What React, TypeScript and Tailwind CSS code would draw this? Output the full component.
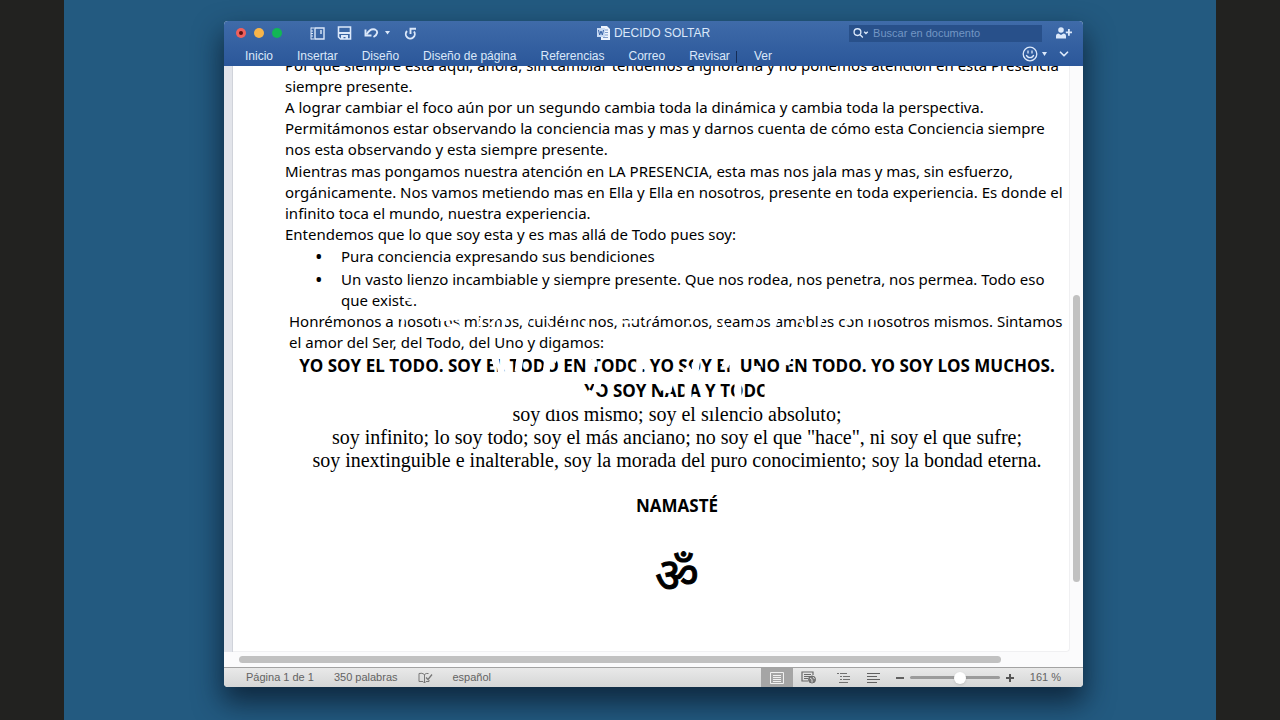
import { ChevronDown } from 'lucide-react';

const tabs = ['Inicio', 'Insertar', 'Diseño', 'Diseño de página', 'Referencias', 'Correo', 'Revisar', 'Ver'];

function TitleBar() {
  return (
    <div className="grid h-6 grid-cols-[1fr_auto_1fr] items-center text-[#dbe8fa]">
      <div className="flex items-center pl-3">
        <div className="flex gap-2">
          <button aria-label="Cerrar" className="flex size-2.5 items-center justify-center rounded-full bg-[#f0605c]">
            <span className="size-1 rounded-full bg-[#5c1010]" />
          </button>
          <button aria-label="Minimizar" className="size-2.5 rounded-full bg-[#f8b54a]" />
          <button aria-label="Ampliar" className="size-2.5 rounded-full bg-[#12b755]" />
        </div>
        <button aria-label="Barra lateral" className="ml-7">
          <svg width="15" height="13" viewBox="0 0 15 13" fill="none" stroke="currentColor" strokeWidth="1.4">
            <path d="M5 1h9v11H5z" />
            <path d="M11 3v4" />
            <path d="M1 .5v12M4 1H1M4 12H1M1 4h2M1 6.500h2M1 9h2" strokeWidth="1" />
          </svg>
        </button>
        <button aria-label="Guardar" className="ml-3">
          <svg width="15" height="14" viewBox="0 0 15 14" fill="none" stroke="currentColor" strokeWidth="1.600">
            <path d="M1.500 1h12v12h-10l-2-2z" />
            <path d="M1.500 7h12" strokeWidth="2" />
            <path d="M4 9h7v4H8.500v-2h-2v2H4z" fill="currentColor" stroke="none" />
          </svg>
        </button>
        <button aria-label="Deshacer" className="ml-3">
          <svg width="15" height="12" viewBox="0 0 15 12" fill="none" stroke="currentColor" strokeWidth="1.900">
            <path d="M2.500 7.500C5 3 8 1.500 11 2.500c3.500 1.500 2.500 5.500-1.500 7.500" />
            <path d="M1.500 2.500v6h6" />
          </svg>
        </button>
        <button aria-label="Opciones de deshacer" className="ml-1.5">
          <svg width="5" height="4" viewBox="0 0 5 4" fill="currentColor">
            <path d="M0 0h5L2.500 3.500z" />
          </svg>
        </button>
        <button aria-label="Repetir" className="ml-3.5">
          <svg width="13" height="13" viewBox="0 0 13 13" fill="none" stroke="currentColor" strokeWidth="1.900">
            <path d="M10 4.500a4.500 4.500 0 1 1-7-.5" />
            <path d="M6.500 7V1.800H12" />
          </svg>
        </button>
      </div>
      <div className="flex items-center gap-1 text-[12px]">
        <svg width="13" height="14" viewBox="0 0 13 14">
          <path d="M4 0h6l3 3v11H4z" fill="#eef4fd" />
          <path d="M6 4h5M6 6.500h5M6 9h5M6 11.500h5" stroke="#7f9dcb" />
          <path d="M0 2h8v9H0z" fill="#c8daf3" />
          <path d="M1.500 4l1.200 5L4 5l1.300 4 1.200-5" stroke="#3a65a8" fill="none" />
        </svg>
        <h1>DECIDO SOLTAR</h1>
      </div>
      <div className="flex items-center justify-end pr-[11px]">
        <label className="flex h-[17px] w-[193px] items-center bg-[#28508a] pl-1">
          <svg width="18" height="12" viewBox="0 0 18 12" fill="none" stroke="currentColor" strokeWidth="1.500">
            <circle cx="5" cy="5" r="3.800" />
            <path d="M8 8l3 3M12.500 4.500l2 2 2-2" />
          </svg>
          <input
            aria-label="Buscar en documento"
            placeholder="Buscar en documento"
            className="ml-1 w-full min-w-0 bg-transparent text-[11px] outline-none placeholder:text-[#7396c4]"
          />
        </label>
        <button aria-label="Compartir" className="ml-3.5">
          <svg width="16" height="12" viewBox="0 0 16 12" fill="currentColor">
            <circle cx="5" cy="3" r="2.800" />
            <path d="M0 11.500V9q0-2.500 2.500-2.500L5 8l2.500-1.500Q10 6.500 10 9v2.500z" />
            <path d="M12 2h1.800v2.500H16v1.700h-2.200v2.500H12V6.200H9.800V4.500H12z" />
          </svg>
        </button>
      </div>
    </div>
  );
}

function Ribbon() {
  return (
    <div className="flex h-[21px] items-center justify-between pr-3 pl-[21px] text-[#dbe8fa]">
      <nav className="flex gap-6 text-[12px]">
        {tabs.map((tab) => (
          <button key={tab}>{tab}</button>
        ))}
      </nav>
      <div className="flex items-center pb-1">
        <button aria-label="Comentarios" className="flex items-center gap-1">
          <svg width="16" height="16" viewBox="0 0 16 16" fill="none" stroke="currentColor" strokeWidth="1.300">
            <circle cx="8" cy="8" r="6.800" />
            <path d="M6 4.500v3M10 4.500v3M4.300 9c1 3.500 6.400 3.500 7.400 0" />
          </svg>
          <svg width="5" height="4" viewBox="0 0 5 4" fill="currentColor">
            <path d="M0 0h5L2.500 4z" />
          </svg>
        </button>
        <button aria-label="Contraer cinta" className="ml-2.5">
          <ChevronDown size={14} strokeWidth={3} />
        </button>
      </div>
    </div>
  );
}

// White specks left on top of the text
function Specks() {
  return (
    <svg className="pointer-events-none absolute left-0 top-0" width="837" height="586" viewBox="233 66 837 586" fill="none" stroke="#fff">
      <path strokeWidth="3" d="M404 299l9 2M403 316v8M440 320l22-2M447 325l12 1M482 318l-3 8M490 325l8-8M506 316l-3 11M529 316l-3 10M538 316v5M548 320l4 6M566 316l5 5M588 317l-3 10M622 322l14 0M643 323l6-6M654 316l-2 4M694 317l-4 7M722 322l4 6M757 317l-3 10M777 316l-2 10M801 320l3 7M822 317l-3 9M850 317l-4 8M871 322l4-5" />
      <path strokeWidth="7" d="M495 358l2 9M500 365l2 10M520 357l-2 15M548 358l-2 15M551 357l6 3M593 359l1 8M640 358l-1 15M684 373l7-5M697 358l-2 15M728 357l-3 10M733 356v18M757 366l0 9M788 357l-2 8" />
      <path strokeWidth="7" d="M587 399l5-8M598 383l-2 9M662 383l2 7M670 383l-3 10M688 383v16M738 384v13M768 383v15" />
      <path strokeWidth="3" d="M548 408h14M700 407l16 2" />
    </svg>
  );
}

function Page() {
  return (
    <article className="relative min-w-0 flex-1 overflow-hidden rounded-br border-r border-b border-[#f0f0f2] bg-white pl-[52px] whitespace-nowrap text-black">
      <div className="-mt-[11px] font-['Noto_Sans',sans-serif] text-[15px] leading-[21px]">
        <p>
          Por que siempre esta aquí, ahora, sin cambiar tendemos a ignorarla y no ponemos atención en esta Presencia
          <br />
          siempre presente.
        </p>
        <p>A lograr cambiar el foco aún por un segundo cambia toda la dinámica y cambia toda la perspectiva.</p>
        <p>
          Permitámonos estar observando la conciencia mas y mas y darnos cuenta de cómo esta Conciencia siempre
          <br />
          nos esta observando y esta siempre presente.
        </p>
        <p className="mt-px">
          Mientras mas pongamos nuestra atención en LA PRESENCIA, esta mas nos jala mas y mas, sin esfuerzo,
          <br />
          orgánicamente. Nos vamos metiendo mas en Ella y Ella en nosotros, presente en toda experiencia. Es donde el
          <br />
          infinito toca el mundo, nuestra experiencia.
        </p>
        <p>Entendemos que lo que soy esta y es mas allá de Todo pues soy:</p>
        <ul className="mt-px ml-14 space-y-0.5">
          <li className="flex">
            <span className="-ml-[26px] w-[26px] shrink-0 text-[20px]">•</span>
            Pura conciencia expresando sus bendiciones
          </li>
          <li className="flex">
            <span className="-ml-[26px] w-[26px] shrink-0 text-[20px]">•</span>
            <span>
              Un vasto lienzo incambiable y siempre presente. Que nos rodea, nos penetra, nos permea. Todo eso
              <br />
              que existe.
            </span>
          </li>
        </ul>
        <p className="ml-1">
          Honrémonos a nosotros mismos, cuidémonos, nutrámonos, seamos amables con nosotros mismos. Sintamos
          <br />
          el amor del Ser, del Todo, del Uno y digamos:
        </p>
      </div>
      <div className="text-center">
        <p className="font-['Open_Sans',sans-serif] text-[17px] leading-[25px] font-bold">
          YO SOY EL TODO. SOY EL TODO EN TODO. YO SOY EL UNO EN TODO. YO SOY LOS MUCHOS.
          <br />
          YO SOY NADA Y TODO
        </p>
        <p className="font-['Liberation_Serif',serif] text-[20px] leading-[23px]">
          soy dios mismo; soy el silencio absoluto;
          <br />
          soy infinito; lo soy todo; soy el más anciano; no soy el que "hace", ni soy el que sufre;
          <br />
          soy inextinguible e inalterable, soy la morada del puro conocimiento; soy la bondad eterna.
        </p>
        <p className="mt-[21px] font-['Open_Sans',sans-serif] text-[17px] leading-[25px] font-bold">NAMASTÉ</p>
        <p className="mt-7 text-[48px] leading-[60px] [-webkit-text-stroke:1px_black]">ॐ</p>
      </div>
      <Specks />
    </article>
  );
}

function StatusBar() {
  return (
    <footer className="flex h-5 items-center justify-between border-t border-[#a3a3a3] bg-linear-to-b from-[#e9e9e9] to-[#d5d6d6] pr-[22px] pl-[22px] text-[11px] text-[#636363]">
      <div className="flex items-center gap-5">
        <span>Página 1 de 1</span>
        <span>350 palabras</span>
        <button aria-label="Ortografía">
          <svg width="15" height="12" viewBox="0 0 15 12" fill="none" stroke="#777">
            <path d="M6.500 2.500V11M6.500 2.500Q4 .5 1 1.500v8h4l1.500 1.500L8 9.500h3V8M6.500 2.500Q8 1 10.500 1.500" />
            <path d="M8 5.500l2 2 4-5" strokeWidth="1.300" />
          </svg>
        </button>
        <span>español</span>
      </div>
      <div className="flex h-full items-center">
        <button aria-label="Diseño de impresión" className="flex h-full w-8 items-center justify-center bg-[#a5a5a5]">
          <svg width="14" height="12" viewBox="0 0 14 12" fill="none" stroke="#f1f1f1">
            <path d="M.5.5h13v11H.5zM3 3.500h8M3 5.500h8M3 7.500h8M3 9.500h8" />
          </svg>
        </button>
        <button aria-label="Diseño web" className="ml-2">
          <svg width="16" height="13" viewBox="0 0 16 13" fill="none" stroke="#696969">
            <path d="M12 4V1H1v9h6M3 3.500h7M3 5.500h6M3 7.500h4" strokeWidth="1.200" />
            <circle cx="11" cy="8.500" r="3.500" fill="#777" />
            <path d="M9 7l2 1.500v3M12 6l1.500 2" stroke="#ddd" />
          </svg>
        </button>
        <button aria-label="Esquema" className="ml-5">
          <svg width="14" height="11" viewBox="0 0 14 11" stroke="#707070">
            <path d="M0 1.500h2M3 1.500h7M3 4.500h2M6 4.500h7M3 7.500h2M6 7.500h7M2 10.500h9" />
          </svg>
        </button>
        <button aria-label="Borrador" className="ml-4">
          <svg width="13" height="11" viewBox="0 0 13 11" stroke="#606060">
            <path d="M0 1.500h13M0 4.500h10M0 7.500h13M0 10.500h10" />
          </svg>
        </button>
        <button aria-label="Alejar" className="ml-4 h-0.5 w-2 bg-[#606060]" />
        <input
          type="range"
          aria-label="Zoom"
          min={0}
          max={100}
          defaultValue={57}
          className="ml-1.5 h-[3px] w-[90px] appearance-none rounded bg-[#9b9b9b] [&::-webkit-slider-thumb]:size-3 [&::-webkit-slider-thumb]:appearance-none [&::-webkit-slider-thumb]:rounded-full [&::-webkit-slider-thumb]:bg-white [&::-webkit-slider-thumb]:shadow"
        />
        <button aria-label="Acercar" className="ml-1.5">
          <svg width="8" height="8" viewBox="0 0 8 8" stroke="#555" strokeWidth="2">
            <path d="M0 4h8M4 0v8" />
          </svg>
        </button>
        <span className="ml-4">161 %</span>
      </div>
    </footer>
  );
}

export default function App() {
  return (
    <div className="flex min-h-screen border-x-[64px] border-[#222220] bg-[#235a80] pt-[21px] pr-[133px] pb-[33px] pl-40 font-['Liberation_Sans',sans-serif]">
      <main className="flex min-w-0 flex-1 flex-col overflow-hidden rounded bg-[#fbfbfc] shadow-[0_14px_28px_2px_rgba(8,24,42,0.75)]">
        <header className="relative bg-linear-to-b from-[#3f6ba9] to-[#2b579a]">
          <TitleBar />
          <Ribbon />
          {/* text cursor resting next to Revisar */}
          <div className="absolute top-[30px] left-[512px] h-3 w-px bg-[#142c55]" />
        </header>
        <div className="flex flex-1">
          <div className="w-[9px] border-r border-[#d0d3da] bg-[#e2e4ea]" />
          <Page />
          <div className="flex w-[13px] flex-col items-center">
            <div className="flex-[229]" />
            <div className="w-[7px] flex-[287] rounded-full bg-[#c1c1c1]" />
            <div className="flex-[70]" />
          </div>
        </div>
        <div className="flex h-[15px] items-center pr-[82px] pl-[15px]">
          <div className="h-[7px] flex-1 rounded-full bg-[#c1c1c1]" />
        </div>
        <StatusBar />
      </main>
    </div>
  );
}
